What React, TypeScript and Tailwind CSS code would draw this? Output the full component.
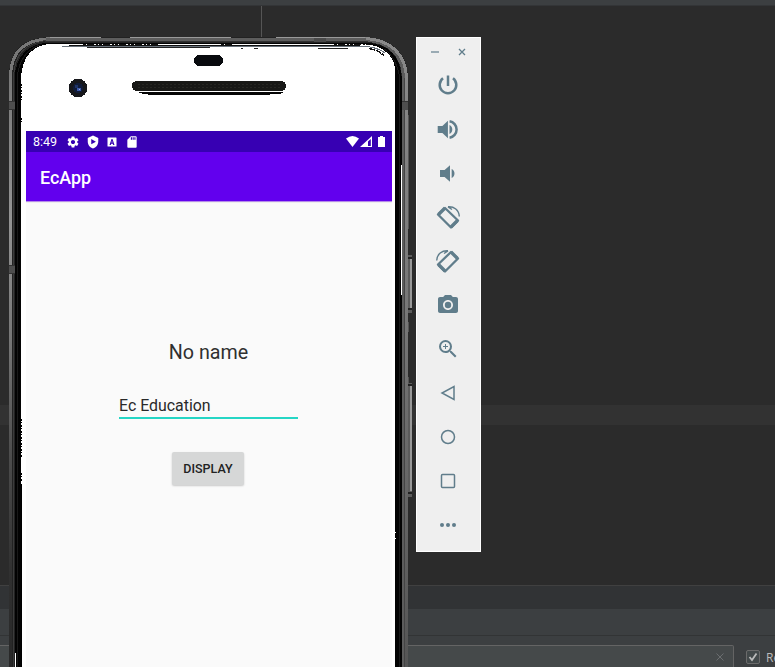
import React from "react";
import { MdPhotoCamera, MdZoomIn, MdSettings, MdSdCard } from "react-icons/md";

function IdeBackground() {
  return (
    <div className="flex h-full flex-col bg-[#2b2b2b]">
      <div className="h-[5px] shrink-0 bg-[#3c3f41]" />
      <div className="h-px shrink-0 bg-[#333537]" />
      <div className="ml-[261px] h-[399px] w-px shrink-0 bg-[#555555]" />
      <div className="h-5 shrink-0 bg-[#323232]" />
      <div className="h-40 shrink-0" />
      <div className="h-px shrink-0 bg-[#404040]" />
      <div className="h-[23px] shrink-0 bg-[#313335]" />
      <div className="h-[26px] shrink-0 bg-[#3c3f41]" />
      <div className="h-px shrink-0 bg-[#323435]" />
      <div className="flex h-[31px] shrink-0 items-start bg-[#3c3f41] pt-[9px]">
        <div className="flex h-[30px] w-[734px] shrink-0 items-start justify-end rounded-tr-[2px] border border-l-0 border-[#646464] bg-[#45494a] pt-[7px] pr-[9px]">
          <svg className="size-2" viewBox="0 0 8 8" stroke="#6b6e70" fill="none"><path d="M.5.5l7 7M7.500.5l-7 7" /></svg>
        </div>
        <div className="mt-[5px] ml-3 size-[14px] shrink-0 rounded-[2px] border border-[#6b6b6b] bg-[#43494a]">
          <svg viewBox="0 0 12 12" fill="none" stroke="#bbbbbb" strokeWidth="1.8"><path d="M2.500 6l2.500 3L9.500 2.500" /></svg>
        </div>
        <span className="mt-[5px] ml-[6px] shrink-0 font-['Open_Sans',sans-serif] text-[12px] leading-4 whitespace-nowrap text-[#bbbbbb]">Re</span>
      </div>
    </div>
  );
}

function PhoneBody() {
  return (
    <svg className="absolute top-0 left-0" width="416" height="667" viewBox="0 0 416 667" shapeRendering="crispEdges">
      <defs>
        <linearGradient id="leftEdge" x1="0" y1="70" x2="0" y2="667" gradientUnits="userSpaceOnUse">
          <stop offset="0" stopColor="#777" /><stop offset=".12" stopColor="#858585" /><stop offset=".25" stopColor="#949494" />
          <stop offset=".45" stopColor="#777" /><stop offset=".65" stopColor="#4c4c4c" /><stop offset=".85" stopColor="#303030" /><stop offset="1" stopColor="#282828" />
        </linearGradient>
        <linearGradient id="rightEdge" x1="0" y1="70" x2="0" y2="667" gradientUnits="userSpaceOnUse">
          <stop offset="0" stopColor="#888" /><stop offset=".4" stopColor="#777" /><stop offset="1" stopColor="#555" />
        </linearGradient>
      </defs>
      <path d="M9 667V75C9 50 23 38 48 37H363C389 38 406 49 408 75V667Z" fill="#222" />
      <path d="M10.500 667V78C10.500 51 24 40 50 38.500" fill="none" stroke="url(#leftEdge)" strokeWidth="3" />
      <path d="M13.500 667V78C14 53 26 43 48 40" fill="none" stroke="#3c3c3c" />
      <path d="M14.500 667V80C15 53 31 42.500 52 42.500H364C388 43 402 56 402 83V667Z" fill="#030303" />
      <path d="M403.500 667V79C403.500 56 390 41 363 40" fill="none" stroke="#5c5c5c" strokeWidth="3" />
      <path d="M406.500 667V78C406 54 390 39 364 38.500" fill="none" stroke="url(#rightEdge)" strokeWidth="3" />
      <path d="M404.500 667V78" stroke="#444" />
      <path d="M50 37.500H101M130 37.500H231M276 37.500H365" stroke="#999" />
      <path d="M46 39.500H366" stroke="#5d5d5d" strokeWidth="3" />
      <path d="M45 41.500H368" stroke="#303030" />
      <path d="M17.500 667V78C18 61 27 49 40 45M399.500 667V79C399 66 391 53 384 49" fill="none" stroke="#191919" />
      <path d="M21 667V80C21 56 34 44 52 44H365C382 45 395 56 395 70V667Z" fill="#fff" />
      <path d="M62 46.500H365Q377 47 385 53" fill="none" stroke="#68717a" />
      <path d="M69 45.500H360" stroke="#111" />
      <path d="M83 44.500H158M221 44.500H232M334 44.500H370" stroke="#111" strokeDasharray="3 1 7 2 2 1" />
      <path d="M87 47.500H210M241 48.500H243M254 48.500H258M318 48.500H348" stroke="#222" />
      <path d="M369 48.500l8 2 7 5" fill="none" stroke="#111" strokeWidth="1.500" strokeDasharray="6 1" />
      <path d="M21.500 84V102M21.500 118V124M21.500 419V458M21.500 473V482" stroke="#000" strokeDasharray="2 1 1 2" />
      <path d="M21.500 484V667" stroke="#000" />
      <path d="M401.500 165V295" stroke="#fff" />
      <path d="M15.500 653V667" stroke="#fff" />
      <path d="M395.500 532V539" stroke="#fff" strokeDasharray="1 5" />
      <path d="M9 101H15V110H9ZM9 265H15V274H9ZM402 101H408V110H402Z" fill="#4e4e4e" />
      <path d="M9 101.500H15M9 265.500H15M402 101.500H408M9 109.500H15M9 273.500H15" stroke="#333" />
      <path d="M314 38h12v4h-12z" fill="#4a4a4a" />
      <path d="M408.500 115V229M408.500 322V332M408.500 377V384" stroke="#555" />
      <path d="M408 255h4v58h-4zM408 383h4v114h-4z" fill="#5c5c5c" />
      <path d="M410.500 259V309M410.500 385V491" stroke="#999" strokeWidth="2" />
      <path d="M408 257.500H412M408 308.500H412M408 384.500H412M408 492.500H412" stroke="#222" strokeWidth="2" />
      <rect x="194" y="55" width="29" height="11" rx="5.500" fill="#080a0e" />
      <rect x="132" y="81" width="154" height="10" rx="4.500" fill="#181816" />
      <path d="M138 84.500H281M138 87.500H281" stroke="#262622" strokeDasharray="2 2" />
      <path d="M139 92.500H283" stroke="#050505" />
      <path d="M142 93.500H281M148 94.500H270" stroke="#050505" />
      <circle cx="78" cy="88" r="9.300" fill="#16171b" />
      <circle cx="78" cy="88" r="5" fill="#101b38" />
      <path d="M75 85h3v3h-3z" fill="#1f3468" /><path d="M77 88h4v3h-4z" fill="#3c59aa" /><path d="M79 89h1v1h-1z" fill="#9faee6" />
    </svg>
  );
}

function StatusBar() {
  return (
    <div className="flex h-[21px] items-center bg-[#3700b3] pl-[7px] text-white">
      <span className="w-[33px] pt-px text-[12.500px] leading-none">8:49</span>
      <MdSettings className="size-[14px]" />
      <svg className="ml-[6px] size-[14px]" viewBox="0 0 24 24" fill="currentColor"><path fillRule="evenodd" d="M12 1L3 5v6c0 5.500 3.800 10.700 9 12 5.200-1.300 9-6.500 9-12V5zM9 7l8 4.500L9 16z" /></svg>
      <svg className="ml-[7px] size-[10px]" viewBox="0 0 10 10"><path fill="white" fillRule="evenodd" d="M1 .5H9Q9.500.5 9.500 1V9Q9.500 9.500 9 9.500H1Q.5 9.500.5 9V1Q.5.5 1 .5ZM4.500 2L2.500 8H3.800L4.200 6.700H5.800L6.200 8H7.500L5.500 2ZM4.500 5.500L5 3.800L5.500 5.500Z" /></svg>
      <MdSdCard className="ml-[8px] size-[14px]" />
      <svg className="ml-[207px]" width="39" height="13" viewBox="0 0 39 13" fill="white">
        <path d="M0 3.500Q6.500-1.500 13 3.500L6.500 12Z" />
        <path fillRule="evenodd" d="M14 12L26 1V12ZM22 6.500V11H24.800V4Z" />
        <path d="M32 2h2V1h3v1h2v10h-7z" />
      </svg>
    </div>
  );
}

function AppScreen() {
  return (
    <div className="absolute top-[131px] left-[26px] flex h-[536px] w-[366px] flex-col bg-[#fafafa] font-[Roboto,sans-serif]">
      <StatusBar />
      <header className="flex h-[49px] items-center bg-[#6200ee] pt-[3px] pl-[14px] text-[17.900px] font-medium text-white">EcApp</header>
      <div className="h-px bg-[#b58be9]" />
      <div className="h-px bg-[#eeeeee]" />
      <main className="flex flex-col items-center pr-[2px]">
        <p className="mt-[138px] h-6 pl-px text-[19.700px] leading-6 text-[#303030]">No name</p>
        <div className="mt-[28px] ml-px h-[26px] w-[179px] border-b-2 border-[#25d6c5] pt-px text-[15.900px] leading-6 text-[#292929]">Ec Education</div>
        <button className="mt-[33px] h-[33px] w-[72px] rounded-[2px] bg-[#d6d7d7] pt-px text-[12.500px] font-medium text-[#222] shadow-[0_1px_2px_#0003]">DISPLAY</button>
      </main>
    </div>
  );
}

function PowerIcon() {
  return (
    <svg className="size-6" viewBox="0 0 24 24" fill="none" stroke="currentColor" strokeWidth="2.500">
      <path d="M12 2.500V13" />
      <path d="M7 5.300A8.300 8.300 0 1 0 17 5.300" />
    </svg>
  );
}

function SpeakerIcon({ loud = false }: { loud?: boolean }) {
  return (
    <svg className="size-[25px]" viewBox="0 0 24 24" fill="currentColor">
      {loud ? (
        <>
          <path d="M2.600 8.700v6.600h4.500L12.400 20.500V3.500L7.100 8.700zM16.600 12c0-1.900-1-3.500-2.700-4.300v8.600c1.700-.8 2.700-2.400 2.700-4.300z" />
          <path d="M14 4.100A8 8 0 0 1 14 19.900" fill="none" stroke="currentColor" strokeWidth="2.400" />
        </>
      ) : (
        <path d="M4.800 8.700v6.600h4.400L14.400 20V4L9.200 8.700zM18.700 12c0-1.900-1-3.500-2.700-4.300v8.600c1.700-.8 2.700-2.400 2.700-4.300z" />
      )}
    </svg>
  );
}

function RotateIcon({ flip = false }: { flip?: boolean }) {
  return (
    <svg className={flip ? "size-6 -scale-x-100" : "size-6"} viewBox="0 0 24 24" fill="none" stroke="currentColor">
      <path d="M9 3L22 15.500L15 22.500L2 9.500Z" strokeWidth="2.300" strokeLinejoin="round" />
      <path d="M2.500 9.500L9 3M15 22L21.500 15.500" strokeWidth="3.300" />
      <path d="M12 1.800C18 1.300 23 5 23.300 11.500M12 1.800L16 4.500" strokeWidth="1.400" />
    </svg>
  );
}

function EmulatorToolbar() {
  const icons = [
    <PowerIcon />,
    <SpeakerIcon loud />,
    <SpeakerIcon />,
    <RotateIcon />,
    <RotateIcon flip />,
    <MdPhotoCamera className="size-6" />,
    <MdZoomIn className="size-6" />,
    <svg className="size-4" viewBox="0 0 16 16" fill="none" stroke="currentColor" strokeWidth="1.500"><path d="M14 1.500V14.500L2 8Z" /></svg>,
    <svg className="size-4" viewBox="0 0 16 16" fill="none" stroke="currentColor" strokeWidth="1.500"><circle cx="8" cy="8" r="6.500" /></svg>,
    <svg className="size-4" viewBox="0 0 16 16" fill="none" stroke="currentColor" strokeWidth="1.500"><rect x="1.500" y="1.500" width="13" height="13" rx="1" /></svg>,
    <svg className="h-4 w-[18px]" viewBox="0 0 18 16" fill="currentColor"><circle cx="3" cy="8" r="2" /><circle cx="9" cy="8" r="2" /><circle cx="15" cy="8" r="2" /></svg>,
  ];
  return (
    <aside className="absolute top-[37px] left-[416px] flex h-[515px] w-[65px] flex-col border border-white bg-[#efefef] text-[#607d8b]">
      <div className="flex h-[25px] shrink-0 items-center justify-between pt-[3px] pr-[14px] pl-[14px]">
        <svg className="h-2 w-2" viewBox="0 0 8 8" stroke="#9aabb4" strokeWidth="2"><path d="M0 4H8" /></svg>
        <svg className="size-2" viewBox="0 0 8 8" stroke="currentColor" strokeWidth="1.300"><path d="M1 1L7 7M7 1L1 7" /></svg>
      </div>
      {icons.map((icon, i) => <div key={i} className="flex h-11 shrink-0 items-center justify-center pr-[2px]">{icon}</div>)}
    </aside>
  );
}

export default function App() {
  return (
    <div className="relative h-[667px] w-[775px] overflow-hidden">
      <IdeBackground />
      <PhoneBody />
      <AppScreen />
      <EmulatorToolbar />
    </div>
  );
}
